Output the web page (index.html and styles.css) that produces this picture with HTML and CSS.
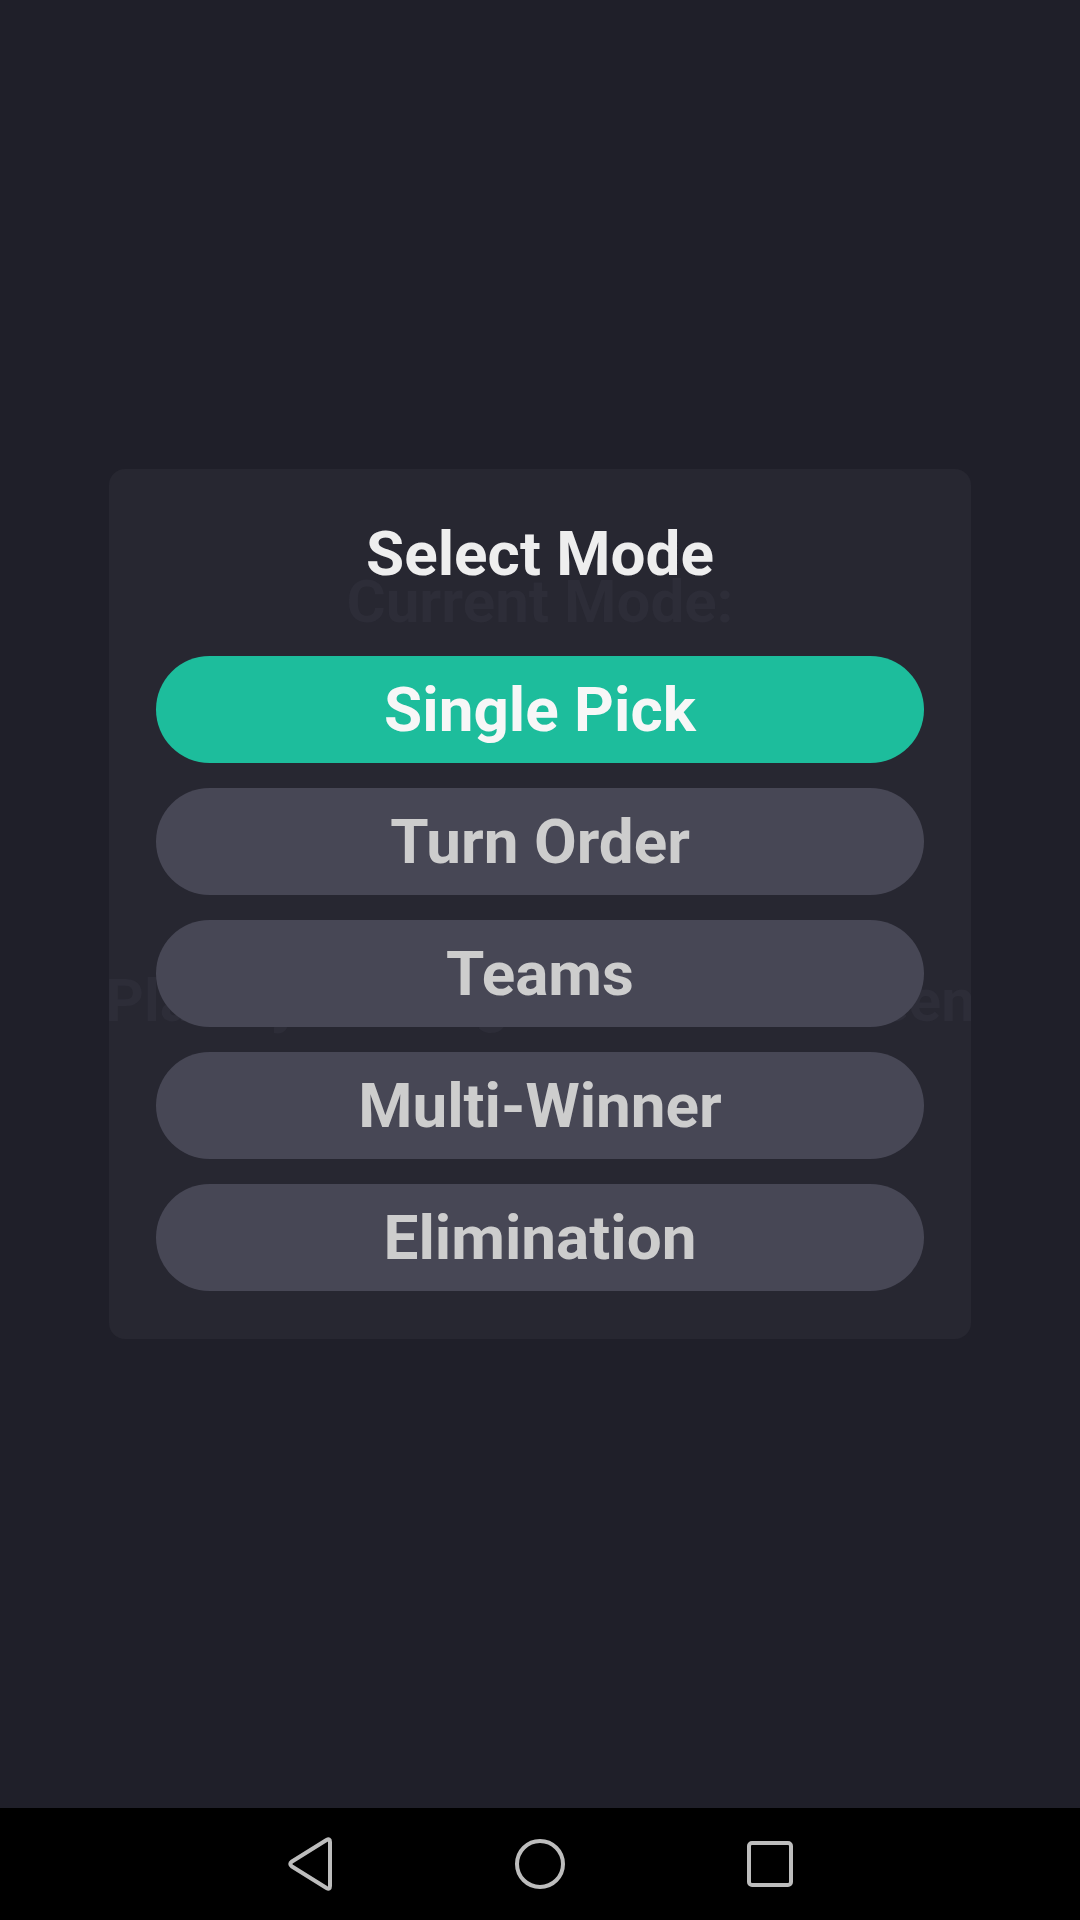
FILE: index.html
```html
<!DOCTYPE html>
<html lang="en">
<head>
<meta charset="utf-8">
<title>Select Mode</title>
<link rel="stylesheet" href="styles.css">
</head>
<body>
<div class="screen">
  <main class="stage">
    <section class="dialog">
      <div class="ghost" aria-hidden="true">
        <div class="ghost-current">Current Mode:</div>
        <div class="ghost-hint">Place your fingers on the screen</div>
      </div>
      <h1 class="title">Select Mode</h1>
      <div class="options">
        <button class="option selected">Single Pick</button>
        <button class="option">Turn Order</button>
        <button class="option">Teams</button>
        <button class="option">Multi-Winner</button>
        <button class="option">Elimination</button>
      </div>
    </section>
  </main>
  <nav class="navbar">
    <svg class="nav-icon" width="60" height="60" viewBox="0 0 60 60">
      <path d="M50 8 L50 52 Q50 56 46.5 54 L12 32.5 Q8.5 30 12 27.5 L46.5 6 Q50 4 50 8 Z" fill="none" stroke="#bdbdbd" stroke-width="4" stroke-linejoin="round"/>
    </svg>
    <svg class="nav-icon" width="60" height="60" viewBox="0 0 60 60">
      <circle cx="30" cy="30" r="23" fill="none" stroke="#bdbdbd" stroke-width="4"/>
    </svg>
    <svg class="nav-icon" width="60" height="60" viewBox="0 0 60 60">
      <rect x="9" y="9" width="42" height="42" rx="3" fill="none" stroke="#bdbdbd" stroke-width="4"/>
    </svg>
  </nav>
</div>
</body>
</html>
```
FILE: styles.css
```css
html, body {
  margin: 0;
  padding: 0;
  background: #1f1f29;
}
body {
  font-family: Roboto, "Noto Sans", "Liberation Sans", sans-serif;
}
.screen {
  width: 1080px;
  height: 1920px;
  display: flex;
  flex-direction: column;
}
.stage {
  height: 1808px;
  display: flex;
  align-items: center;
  justify-content: center;
  background: #1f1f29;
}
.dialog {
  position: relative;
  overflow: hidden;
  width: 862px;
  height: 870px;
  box-sizing: border-box;
  padding: 50px 47px 48px;
  background: #272731;
  border-radius: 16px;
  display: flex;
  flex-direction: column;
}
.ghost {
  position: absolute;
  inset: 0;
  pointer-events: none;
  color: #2d2d38;
  font-weight: 700;
  font-size: 60px;
  line-height: 70px;
  text-align: center;
  white-space: nowrap;
}
.ghost-current {
  margin-top: 98px;
}
.ghost-hint {
  margin-top: 329px;
  margin-left: -4px;
  width: 870px;
}
.title {
  position: relative;
  margin: 0;
  text-align: center;
  color: #eeeeee;
  font-size: 62px;
  line-height: 70px;
  font-weight: 700;
}
.options {
  position: relative;
  margin-top: 67px;
  display: flex;
  flex-direction: column;
  gap: 25px;
}
.option {
  height: 107px;
  border: none;
  border-radius: 54px;
  background: #474755;
  color: #cdcdcd;
  font-family: inherit;
  font-size: 62px;
  font-weight: 700;
  line-height: 70px;
  padding: 0;
  display: flex;
  align-items: center;
  justify-content: center;
}
.option.selected {
  background: #1dbd9c;
  color: #f7f7f7;
}
.navbar {
  height: 112px;
  background: #000000;
  display: flex;
  align-items: center;
  justify-content: center;
  gap: 170px;
}
.nav-icon {
  display: block;
}
```
